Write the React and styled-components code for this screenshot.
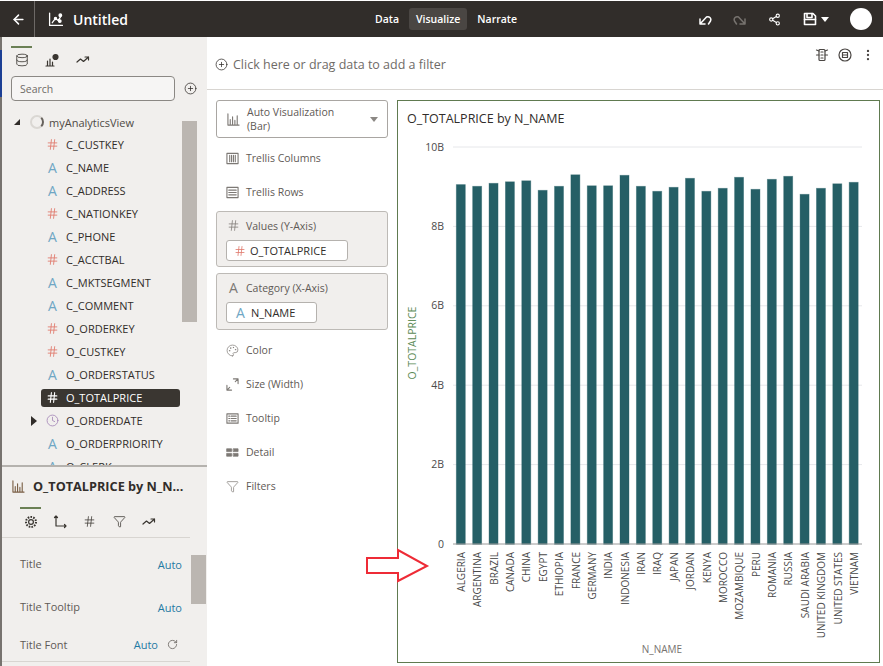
import styled, { createGlobalStyle } from 'styled-components';
import {
  ArrowLeft,
  CirclePlus,
  Clock,
  Database,
  EllipsisVertical,
  Funnel,
  Hash,
  Palette,
  RotateCw,
  Share2,
} from 'lucide-react';

const GlobalStyle = createGlobalStyle`
  html, body {
    margin: 0;
    padding: 0;
    background: #fff;
  }
  body {
    font-family: 'Open Sans', 'Liberation Sans', sans-serif;
  }
  * {
    box-sizing: border-box;
  }
`;

const Page = styled.div`
  position: relative;
  width: 883px;
  height: 666px;
  overflow: hidden;
  padding-top: 1px;
  background: #fff;
`;

const Header = styled.header`
  display: flex;
  align-items: center;
  height: 36px;
  background: #312d2a;
  color: #fff;
`;

const BackButton = styled.div`
  display: flex;
  align-items: center;
  justify-content: center;
  width: 35px;
  height: 36px;
  padding-left: 2px;
  border-right: 1px solid #6d6966;
`;

const TitleGroup = styled.div`
  display: flex;
  align-items: center;
  gap: 10px;
  width: 340px;
  padding-left: 13px;
  font-size: 14px;
  font-weight: 600;
`;

const Nav = styled.nav`
  display: flex;
  align-items: center;
  gap: 10px;
  font-size: 10.5px;
  font-weight: 600;
`;

const NavItem = styled.div`
  padding: 4px ${(p) => (p.$active ? '7px' : '0')};
  height: 22px;
  border-radius: 3px;
  background: ${(p) => (p.$active ? '#4a4643' : 'transparent')};
`;

const Actions = styled.div`
  display: flex;
  align-items: center;
  margin-left: auto;
  padding-right: 11px;
`;

const ActionSlot = styled.div`
  display: flex;
  justify-content: center;
  align-items: center;
  width: ${(p) => p.$width || 35}px;
  color: ${(p) => (p.$muted ? '#77736f' : '#fff')};
`;

const Caret = styled.span`
  width: 0;
  height: 0;
  margin-left: 4px;
  border-left: 4px solid transparent;
  border-right: 4px solid transparent;
  border-top: 5px solid #fff;
`;

const Avatar = styled.div`
  width: 22px;
  height: 22px;
  margin-left: 10px;
  border-radius: 50%;
  background: #fff;
`;

const Body = styled.div`
  display: flex;
  height: 629px;
`;

const Edge = styled.div`
  flex: 0 0 2px;
  background: linear-gradient(
    #77736f 0 13px,
    #1c3f94 13px 60px,
    #77736f 60px
  );
`;

const Sidebar = styled.aside`
  display: flex;
  flex-direction: column;
  flex: 0 0 205px;
  background: #f1efed;
  color: #312d2a;
`;

const DataPanel = styled.section`
  position: relative;
  height: 430px;
  overflow: hidden;
  padding: 9px 0 0 9px;
  border-bottom: 2px solid #b5b2ae;
`;

const TabRow = styled.div`
  display: flex;
  align-items: flex-start;
  gap: ${(p) => p.$gap}px;
  height: ${(p) => p.$height}px;
`;

const Tab = styled.div`
  display: flex;
  justify-content: center;
  width: 21px;
  padding-top: ${(p) => p.$pad || 5}px;
  border-top: 2px solid ${(p) => (p.$active ? '#6b8055' : 'transparent')};
  color: #3a3631;
`;

const SearchRow = styled.div`
  display: flex;
  align-items: center;
  gap: 9px;
  margin-top: 6px;
`;

const SearchBox = styled.div`
  display: flex;
  align-items: center;
  width: 164px;
  height: 25px;
  padding-left: 8px;
  border: 1px solid #8b8884;
  border-radius: 4px;
  background: #f6f5f4;
  color: #6f6b67;
  font-size: 10.5px;
`;

const Tree = styled.ul`
  margin: 9px 0 0;
  padding: 0;
  list-style: none;
`;

const RootRow = styled.li`
  display: flex;
  align-items: center;
  height: 23px;
  padding: 1px 0 0 3px;
  font-size: 11px;
  color: #4f4a45;
`;

const Triangle = styled.span`
  width: 0;
  height: 0;
  margin-right: 10px;
  border-bottom: 6px solid #312d2a;
  border-left: 6px solid transparent;
`;

const Spinner = styled.span`
  width: 14px;
  height: 14px;
  margin-right: 5px;
  border: 2px solid #dad7d3;
  border-right-color: #66615c;
  border-radius: 50%;
`;

const FieldRow = styled.li`
  display: flex;
  align-items: center;
  width: 139px;
  height: 23px;
  margin-left: 30px;
  padding-left: 5px;
  font-size: 11px;
  white-space: nowrap;
`;

const FieldInner = styled.div`
  display: flex;
  align-items: center;
  gap: 7px;
  flex: 1;
  height: 18px;
  margin-left: -5px;
  padding-left: 5px;
  border-radius: 3px;
  background: ${(p) => (p.$selected ? '#3a3631' : 'transparent')};
  color: ${(p) => (p.$selected ? '#fff' : '#312d2a')};
`;

const Expander = styled.span`
  position: absolute;
  left: 29px;
  top: 379px;
  width: 0;
  height: 0;
  border-top: 5px solid transparent;
  border-bottom: 5px solid transparent;
  border-left: 6px solid #312d2a;
`;

const LetterIcon = styled.span`
  display: inline-flex;
  justify-content: center;
  width: 13px;
  font-size: ${(p) => p.$size || 14}px;
  line-height: 1;
  color: ${(p) => p.$color || '#6fa6c4'};
`;

const Thumb = styled.div`
  position: absolute;
  left: ${(p) => p.$left}px;
  top: ${(p) => p.$top}px;
  width: 15px;
  height: ${(p) => p.$height}px;
  background: #bbb6b1;
`;

const PropertiesPanel = styled.section`
  position: relative;
  flex: 1;
  overflow: hidden;
`;

const PropertiesTitle = styled.div`
  display: flex;
  align-items: center;
  gap: 8px;
  height: 40px;
  padding: 0 0 2px 10px;
  font-size: 12.7px;
  font-weight: 700;
  white-space: nowrap;
`;

const PropertiesTabs = styled.div`
  height: 31px;
  margin-right: 17px;
  padding-left: 18px;
  border-bottom: 1px solid #d8d5d1;
`;

const PropertyRow = styled.div`
  display: flex;
  align-items: ${(p) => (p.$last ? 'center' : 'flex-start')};
  justify-content: space-between;
  width: 188px;
  height: ${(p) => p.$height}px;
  padding: ${(p) => p.$pad}px 8px 0 18px;
  border-bottom: ${(p) => (p.$last ? '1px solid #d8d5d1' : 'none')};
  font-size: 11px;
  color: #5f5a56;
`;

const AutoValue = styled.span`
  display: flex;
  align-items: center;
  gap: 9px;
  margin-top: ${(p) => (p.$last ? '0' : '1px')};
  margin-right: ${(p) => (p.$last ? '4px' : '0')};
  color: #1f7aa3;
`;

const Workspace = styled.main`
  flex: 1;
  display: flex;
  flex-direction: column;
`;

const FilterBar = styled.div`
  position: relative;
  display: flex;
  align-items: center;
  gap: 5px;
  height: 53px;
  padding: 3px 0 0 8px;
  border-bottom: 1px solid #d8d5d1;
  color: #6f6b67;
  font-size: 12.5px;
`;

const FilterTools = styled.div`
  position: absolute;
  top: 11px;
  right: 8px;
  display: flex;
  gap: 9px;
  color: #4a4643;
`;

const Content = styled.div`
  display: flex;
  flex: 1;
  padding-top: 10px;
`;

const Grammar = styled.div`
  flex: 0 0 190px;
  padding-left: 9px;
  color: #5f5a56;
  font-size: 10.5px;
`;

const VizPicker = styled.div`
  display: flex;
  align-items: center;
  width: 172px;
  height: 38px;
  padding: 0 9px 0 10px;
  border: 1px solid #a9a6a2;
  border-radius: 3px;
  line-height: 14px;
`;

const VizLabel = styled.div`
  flex: 1;
  margin-left: 7px;
`;

const PickerCaret = styled.span`
  width: 0;
  height: 0;
  border-left: 4px solid transparent;
  border-right: 4px solid transparent;
  border-top: 5px solid #8b8884;
`;

const DropRows = styled.div`
  margin: 3px 0 2px;
`;

const DropRow = styled.div`
  display: flex;
  align-items: center;
  gap: 7px;
  height: 34px;
  padding-left: 10px;
`;

const DropBox = styled.div`
  width: 172px;
  height: ${(p) => p.$height}px;
  margin-bottom: ${(p) => p.$gap}px;
  padding: 4px 0 0 10px;
  border: 1px solid #bdbab6;
  border-radius: 3px;
  background: #f1efed;
`;

const DropTitle = styled.div`
  display: flex;
  align-items: center;
  gap: 6px;
  height: 19px;
`;

const Pill = styled.div`
  display: flex;
  align-items: center;
  gap: 4px;
  width: ${(p) => p.$width}px;
  height: 21px;
  margin: 5px 0 0 -1px;
  padding-left: 7px;
  border: 1px solid #b5b2ae;
  border-radius: 3px;
  background: #fff;
  color: #312d2a;
  font-size: 11px;
`;

const ChartPanel = styled.section`
  width: 483px;
  height: 563px;
  border: 1px solid #607a50;
`;

const ChartTitle = styled.h2`
  margin: 0;
  height: 34px;
  padding: 9px 0 0 9px;
  font-size: 12.5px;
  font-weight: 400;
  color: #312d2a;
`;

const ChartSvg = styled.svg`
  display: block;
  font-family: 'Open Sans', 'Liberation Sans', sans-serif;
`;

const CalloutArrow = styled.svg`
  position: absolute;
  left: 360px;
  top: 544px;
`;

const lineIcon = {
  fill: 'none',
  stroke: 'currentColor',
  strokeLinecap: 'round',
  strokeLinejoin: 'round',
};

function Glyph({ size = 14, children, color, weight }) {
  return (
    <svg
      width={size}
      height={size}
      viewBox="0 0 14 14"
      {...lineIcon}
      strokeWidth={weight || 1.2}
      style={color ? { color } : undefined}
    >
      {children}
    </svg>
  );
}

const BarsIcon = ({ color, size }) => (
  <Glyph color={color} size={size}>
    <path d="M1 1v12h12M3.5 12V7M6 12V4M8.5 12V8M11 12V3" />
  </Glyph>
);

const TrendIcon = () => (
  <Glyph>
    <path d="M1 9l3.5-3 3 2.5L12.5 4M9 4h3.5v3" />
  </Glyph>
);

const GRAY = '#7d7975';

const FIELDS = [
  ['C_CUSTKEY', 'n'],
  ['C_NAME', 'a'],
  ['C_ADDRESS', 'a'],
  ['C_NATIONKEY', 'n'],
  ['C_PHONE', 'a'],
  ['C_ACCTBAL', 'n'],
  ['C_MKTSEGMENT', 'a'],
  ['C_COMMENT', 'a'],
  ['O_ORDERKEY', 'n'],
  ['O_CUSTKEY', 'n'],
  ['O_ORDERSTATUS', 'a'],
  ['O_TOTALPRICE', 's'],
  ['O_ORDERDATE', 'd'],
  ['O_ORDERPRIORITY', 'a'],
  ['O_CLERK', 'a'],
];

const BARS = [
  ['ALGERIA', 184.3], ['ARGENTINA', 186], ['BRAZIL', 183], ['CANADA', 181.5], ['CHINA', 180.5],
  ['EGYPT', 190], ['ETHIOPIA', 186], ['FRANCE', 174.5], ['GERMANY', 185.5], ['INDIA', 185.5],
  ['INDONESIA', 175], ['IRAN', 186], ['IRAQ', 191], ['JAPAN', 187], ['JORDAN', 178],
  ['KENYA', 191], ['MOROCCO', 188], ['MOZAMBIQUE', 177], ['PERU', 189], ['ROMANIA', 179],
  ['RUSSIA', 176], ['SAUDI ARABIA', 194], ['UNITED KINGDOM', 188], ['UNITED STATES', 183.5], ['VIETNAM', 182],
];

const TICKS = [
  ['10B', 147],
  ['8B', 226.4],
  ['6B', 305.8],
  ['4B', 385.2],
  ['2B', 464.6],
];

function FieldIcon({ kind }) {
  if (kind === 'n') return <Hash size={13} color="#e0786c" strokeWidth={1.6} />;
  if (kind === 's') return <Hash size={13} color="#fff" strokeWidth={2} />;
  if (kind === 'd') return <Clock size={13} color="#9d7cb3" strokeWidth={1.4} />;
  return <LetterIcon>A</LetterIcon>;
}

function Chart() {
  // viewBox uses page coordinates, the svg starts at (398, 135)
  return (
    <ChartSvg width="481" height="528" viewBox="398 135 481 528">
      {TICKS.map(([label, y]) => (
        <g key={label}>
          <line x1="453" x2="862" y1={y} y2={y} stroke="#e6e7ea" />
          <text x="444" y={y + 3.5} textAnchor="end" fontSize="10.5" fill="#4b4b4b">
            {label}
          </text>
        </g>
      ))}
      <text x="444" y="547.5" textAnchor="end" fontSize="10.5" fill="#4b4b4b">
        0
      </text>
      {BARS.map(([name, top], i) => {
        const x = 456 + i * 16.37;
        return (
          <g key={name}>
            <rect
              x={x + 0.3}
              y={top + 0.3}
              width="9"
              height={544 - top}
              fill="#255f66"
              stroke="#255f66"
              strokeOpacity="0.45"
              strokeWidth="0.8"
            />
            <text
              transform={`translate(${x + 9} 552) rotate(-90)`}
              textAnchor="end"
              fontSize="10"
              fill="#4a4a4a"
            >
              {name}
            </text>
          </g>
        );
      })}
      <line x1="453" x2="862" y1="544" y2="544" stroke="#9a9a9a" />
      <text transform="translate(416 343) rotate(-90)" textAnchor="middle" fontSize="10.5" fill="#5b8a55">
        O_TOTALPRICE
      </text>
      <text x="662" y="653" textAnchor="middle" fontSize="10" fill="#77736f">
        N_NAME
      </text>
    </ChartSvg>
  );
}

export default function App() {
  return (
    <Page>
      <GlobalStyle />
      <Header>
        <BackButton>
          <ArrowLeft size={15} strokeWidth={2.4} />
        </BackButton>
        <TitleGroup>
          <Glyph size={15}>
            <path d="M1.5 1v11.5H13.5" />
            <path d="M4 10l3-4 2.5 2L12 4" />
            <circle cx="7" cy="6" r="1" fill="currentColor" />
            <circle cx="11.5" cy="3" r="1.2" fill="currentColor" />
            <circle cx="11" cy="8.5" r="1.2" fill="currentColor" />
          </Glyph>
          Untitled
        </TitleGroup>
        <Nav>
          <NavItem>Data</NavItem>
          <NavItem $active>Visualize</NavItem>
          <NavItem>Narrate</NavItem>
        </Nav>
        <Actions>
          <ActionSlot>
            <Glyph weight={1.5}>
              <path d="M2 7v5h5M2 12l6.5-7a3 3 0 0 1 4 4l-2 3" />
            </Glyph>
          </ActionSlot>
          <ActionSlot $muted>
            <Glyph weight={1.5}>
              <path d="M12 7v5H7M12 12L5.5 5a3 3 0 0 0-4 4l2 3" />
            </Glyph>
          </ActionSlot>
          <ActionSlot>
            <Share2 size={13} strokeWidth={2} />
          </ActionSlot>
          <ActionSlot $width={48}>
            <Glyph weight={1.6}>
              <path d="M1.5 1.5h8.5l2.5 2.5v8.5h-11z" />
              <path d="M4 1.5v4h5v-4M1.5 7.5h11" />
            </Glyph>
            <Caret />
          </ActionSlot>
          <Avatar />
        </Actions>
      </Header>
      <Body>
        <Edge />
        <Sidebar>
          <DataPanel>
            <TabRow $gap={9.5} $height={24}>
              <Tab $active>
                <Database size={14} strokeWidth={1.4} />
              </Tab>
              <Tab>
                <Glyph>
                  <path d="M1 13h8M2.5 13V8M5 13V6M7.5 13V9" />
                  <circle cx="10.5" cy="4" r="2.5" fill="currentColor" />
                </Glyph>
              </Tab>
              <Tab>
                <TrendIcon />
              </Tab>
            </TabRow>
            <SearchRow>
              <SearchBox>Search</SearchBox>
              <CirclePlus size={13} color="#312d2a" strokeWidth={1.4} />
            </SearchRow>
            <Tree>
              <RootRow>
                <Triangle />
                <Spinner />
                myAnalyticsView
              </RootRow>
              {FIELDS.map(([name, kind]) => (
                <FieldRow key={name}>
                  <FieldInner $selected={kind === 's'}>
                    <FieldIcon kind={kind} />
                    {name}
                  </FieldInner>
                </FieldRow>
              ))}
            </Tree>
            <Expander />
            <Thumb $left={180} $top={84} $height={201} />
          </DataPanel>
          <PropertiesPanel>
            <PropertiesTitle>
              <BarsIcon color="#7a5f45" size={13} />
              O_TOTALPRICE by N_N...
            </PropertiesTitle>
            <PropertiesTabs>
              <TabRow $gap={8.5} $height={30}>
                <Tab $active $pad={6}>
                  <Glyph>
                    <circle cx="7" cy="7" r="5" strokeDasharray="1.6 1.2" strokeWidth="2" strokeLinecap="butt" />
                    <circle cx="7" cy="7" r="2.4" />
                  </Glyph>
                </Tab>
                <Tab $pad={6}>
                  <Glyph>
                    <path d="M3 1v10h10M1.5 2.5L3 1l1.5 1.5M11.5 9.5L13 11l-1.5 1.5" />
                  </Glyph>
                </Tab>
                <Tab $pad={6}>
                  <Hash size={13} strokeWidth={1.4} />
                </Tab>
                <Tab $pad={6}>
                  <Funnel size={13} strokeWidth={1.4} />
                </Tab>
                <Tab $pad={6}>
                  <TrendIcon />
                </Tab>
              </TabRow>
            </PropertiesTabs>
            <PropertyRow $height={43} $pad={18}>
              Title
              <AutoValue>Auto</AutoValue>
            </PropertyRow>
            <PropertyRow $height={38} $pad={18}>
              Title Tooltip
              <AutoValue>Auto</AutoValue>
            </PropertyRow>
            <PropertyRow $height={43} $pad={8} $last>
              Title Font
              <AutoValue $last>
                Auto
                <RotateCw size={11} color="#77736f" />
              </AutoValue>
            </PropertyRow>
            <Thumb $left={189} $top={88} $height={49} />
          </PropertiesPanel>
        </Sidebar>
        <Workspace>
          <FilterBar>
            <CirclePlus size={13} color="#312d2a" strokeWidth={1.4} />
            Click here or drag data to add a filter
            <FilterTools>
              <Glyph color="#4a4643">
                <rect x="4" y="1.5" width="6" height="11" rx="1" />
                <path d="M6 4h2M6 7h2M6 10h2M4 3L1.5 2M10 3l2.5-1M4 7H1.5M10 7h2.5" />
              </Glyph>
              <Glyph color="#4a4643">
                <circle cx="7" cy="7" r="6" />
                <path d="M4.5 4.5h5v5h-5zM4.5 7h5" />
              </Glyph>
              <EllipsisVertical size={14} strokeWidth={2} />
            </FilterTools>
          </FilterBar>
          <Content>
            <Grammar>
              <VizPicker>
                <BarsIcon color={GRAY} size={13} />
                <VizLabel>
                  Auto Visualization
                  <br />
                  (Bar)
                </VizLabel>
                <PickerCaret />
              </VizPicker>
              <DropRows>
                <DropRow>
                  <Glyph color={GRAY} size={13}>
                    <rect x="1" y="1.5" width="12" height="11" />
                    <path d="M4 3.5v7M6 3.5v7M8 3.5v7M10 3.5v7" />
                  </Glyph>
                  Trellis Columns
                </DropRow>
                <DropRow>
                  <Glyph color={GRAY} size={13}>
                    <rect x="1" y="1.5" width="12" height="11" />
                    <path d="M3 4.5h8M3 7h8M3 9.5h8" />
                  </Glyph>
                  Trellis Rows
                </DropRow>
              </DropRows>
              <DropBox $height={56} $gap={6}>
                <DropTitle>
                  <Hash size={13} color={GRAY} strokeWidth={1.4} />
                  Values (Y-Axis)
                </DropTitle>
                <Pill $width={122}>
                  <Hash size={12} color="#e0786c" strokeWidth={1.6} />
                  O_TOTALPRICE
                </Pill>
              </DropBox>
              <DropBox $height={57} $gap={3}>
                <DropTitle>
                  <LetterIcon $color={GRAY}>A</LetterIcon>
                  Category (X-Axis)
                </DropTitle>
                <Pill $width={91}>
                  <LetterIcon>A</LetterIcon>
                  N_NAME
                </Pill>
              </DropBox>
              <DropRow>
                <Palette size={13} color={GRAY} strokeWidth={1.3} />
                Color
              </DropRow>
              <DropRow>
                <Glyph color={GRAY} size={13}>
                  <path d="M1 8v5h5M13 6V1H8M1 13l3-3M13 1l-3 3" />
                </Glyph>
                Size (Width)
              </DropRow>
              <DropRow>
                <Glyph color={GRAY} size={13}>
                  <rect x="1" y="2" width="12" height="10" />
                  <path d="M3 4.5h1M5.5 4.5h5.500M3 7h1M5.500 7h5.500M3 9.500h1M5.500 9.500h5.500" />
                </Glyph>
                Tooltip
              </DropRow>
              <DropRow>
                <Glyph color={GRAY} size={13} weight={0.8}>
                  <path d="M1 3h5v3H1zM8 3h5v3H8zM1 8h5v3H1zM8 8h5v3H8z" fill="currentColor" />
                </Glyph>
                Detail
              </DropRow>
              <DropRow>
                <Funnel size={13} color={GRAY} strokeWidth={1.3} />
                Filters
              </DropRow>
            </Grammar>
            <ChartPanel>
              <ChartTitle>O_TOTALPRICE by N_NAME</ChartTitle>
              <Chart />
            </ChartPanel>
          </Content>
        </Workspace>
      </Body>
      <CalloutArrow width="72" height="42" viewBox="360 544 72 42">
        <path
          d="M367 558H398V550L427 566L398 581V573H367Z"
          fill="#fff"
          stroke="#ee2b36"
          strokeWidth="2"
        />
      </CalloutArrow>
    </Page>
  );
}
